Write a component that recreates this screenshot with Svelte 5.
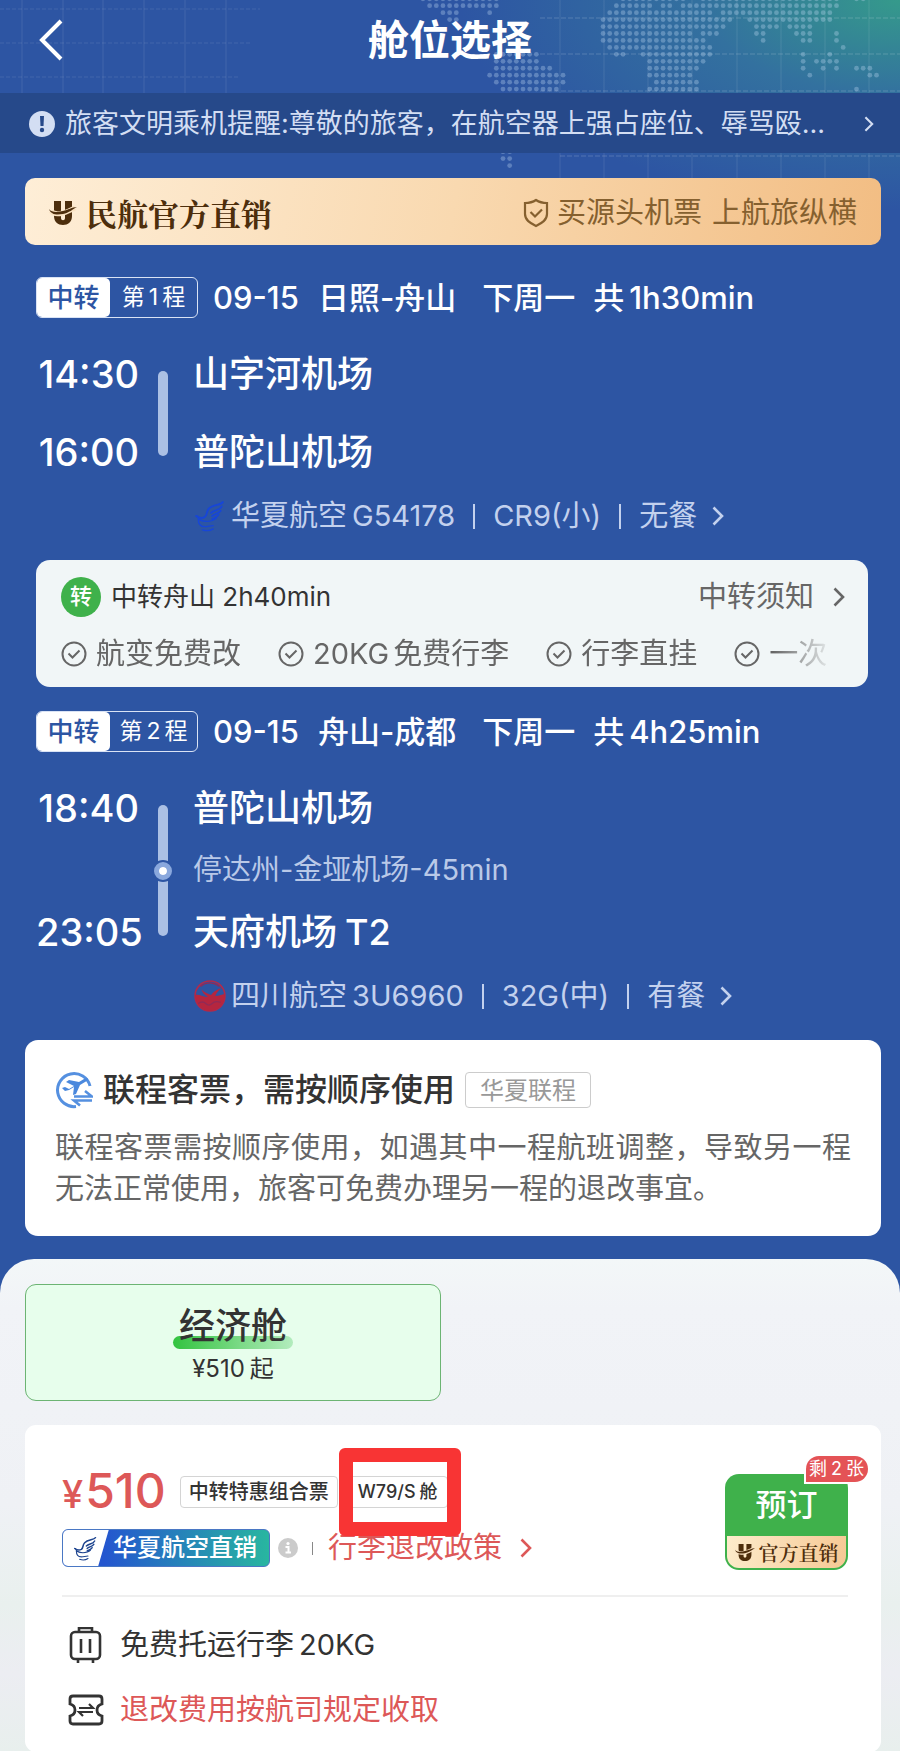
<script lang="ts">
  const legs = [
    {
      label: ['第', '1', '程'],
      date: '09-15',
      route: '日照-舟山',
      duration: '1h30min',
      from: { time: '14:30', airport: '山字河机场', terminal: '' },
      to: { time: '16:00', airport: '普陀山机场', terminal: '' },
      stop: '',
      airline: '华夏航空',
      logo: 'huaxia',
      flight: 'G54178',
      plane: 'CR9(小)',
      meal: '无餐'
    },
    {
      label: ['第', '2', '程'],
      date: '09-15',
      route: '舟山-成都',
      duration: '4h25min',
      from: { time: '18:40', airport: '普陀山机场', terminal: '' },
      to: { time: '23:05', airport: '天府机场', terminal: 'T2' },
      stop: '停达州-金垭机场-45min',
      airline: '四川航空',
      logo: 'sichuan',
      flight: '3U6960',
      plane: '32G(中)',
      meal: '有餐'
    }
  ];

  const perks = [['航变免费改'], ['20KG', '免费行李'], ['行李直挂'], ['一次']];

  // Dotted world map: [row, first column, last column]
  const runs = [
    [-1, -12, -1], [-1, 18, 27], [-1, 30, 50], [-1, 53, 54],
    [0, -11, -1], [0, 17, 22], [0, 24, 25], [0, 27, 50],
    [1, -9, -7], [1, -2, -2], [1, 16, 31], [1, 33, 49],
    [2, -8, -7], [2, 15, 34], [2, 37, 49],
    [3, 15, 33], [3, 38, 41], [3, 43, 46],
    [4, 15, 28], [4, 30, 32], [4, 38, 39], [4, 44, 46], [4, 50, 50],
    [5, 15, 30], [5, 39, 39], [5, 45, 46], [5, 50, 50],
    [6, 16, 31], [6, 51, 51],
    [7, -1, 5], [7, 17, 18], [7, 21, 31], [7, 45, 45], [7, 49, 49],
    [8, -1, 5], [8, 22, 30], [8, 45, 45], [8, 47, 50],
    [9, -1, 7], [9, 22, 29], [9, 45, 45], [9, 48, 48], [9, 50, 50], [9, 53, 55],
    [10, -2, 9], [10, 22, 28], [10, 46, 46], [10, 55, 56],
    [11, -1, 9], [11, 23, 29],
    [12, 0, 8], [12, 22, 29], [12, 53, 53],
    [21, 0, 1], [22, 0, 1], [23, 1, 1]
  ];

  const dots = runs.flatMap(([row, first, last]) =>
    Array.from({ length: last - first + 1 }, (_, i) => ({
      x: 503 + (first + i) * 6.67,
      y: 5.7 + row * 6.95
    }))
  );

  const meridians = [22, 63, 103, 144, 185, 226, 560, 604, 648, 692, 737, 781, 825, 869];
</script>

{#snippet chevron()}
  <svg class="chevron" viewBox="0 0 12 20" aria-hidden="true">
    <path d="M1.5 1.5 10 10l-8.500 8.500" fill="none" stroke="currentColor" stroke-width="2.600" />
  </svg>
{/snippet}

{#snippet wing()}
  <g fill="none" stroke="currentColor" stroke-linecap="round" stroke-linejoin="round">
    <path d="M27 2c-2 3-9 2-13 6-3 3-1 6-4 8-2 1-5 1-8-1" stroke-width="1.800" />
    <path d="M26 6c-2 4-7 3-10 6M25 10c-2 3-6 3-8 5M23 14c-1 2-4 3-6 4" stroke-width="1.700" />
    <path d="M3 15c1 4 4 5 9 5 4 0 7-1 9-3M4 18c0 4 2 7 6 7 3 0 5-1 8-1M8 28c3 1 7 1 10-1" stroke-width="1.300" />
  </g>
{/snippet}

{#snippet sellerLogo()}
  <svg class="seller-logo" viewBox="0 0 28 26" aria-hidden="true">
    <path d="M5 1h7v17c0 3 4 3 4 0V1h7v15c0 6-4 9-9 9s-9-3-9-9z" fill="currentColor" />
    <path d="M2 11c3 4 8 3 12 2s8-3 12-5" fill="none" stroke="#fbe3c2" stroke-width="5" />
    <path d="M0 9c3 4 9 3 14 2 5-1 9-4 14-4-4 2-8 6-14 7C8 15 2 15 0 9z" fill="currentColor" />
  </svg>
{/snippet}

<div class="page">
  <svg class="map" viewBox="0 0 900 178" preserveAspectRatio="xMaxYMin slice" aria-hidden="true">
    <g stroke="#ffffff" stroke-opacity="0.1">
      {#each meridians as x}
        <path d="M{x} 0V{x < 300 ? 93 : 178}" />
      {/each}
      <path d="M0 9H260M0 43H250M0 77H240" stroke-dasharray="4 2" />
      <path d="M540 18H900M540 54H900M540 91H900M560 156H900" stroke-dasharray="5 2" stroke-opacity="0.18" />
    </g>
    <g fill="#c5dcf5" fill-opacity="0.32">
      {#each dots as dot}
        <circle cx={dot.x} cy={dot.y} r="2.400" />
      {/each}
    </g>
  </svg>

  <header class="topbar">
    <button class="back" aria-label="返回">
      <svg viewBox="0 0 26 42" aria-hidden="true">
        <path d="M23 2 4 21l19 19" fill="none" stroke="currentColor" stroke-width="4" />
      </svg>
    </button>
    <h1>舱位选择</h1>
  </header>

  <a class="alert" href="#alert">
    <svg class="alert-icon" viewBox="0 0 26 26" aria-hidden="true">
      <circle cx="13" cy="13" r="13" fill="#d3def3" />
      <path d="M11 5h4l-.5 10h-3z" fill="#26498a" />
      <circle cx="13" cy="19" r="2.200" fill="#26498a" />
    </svg>
    <span class="alert-text">旅客文明乘机提醒:尊敬的旅客，在航空器上强占座位、辱骂殴...</span>
    {@render chevron()}
  </a>

  <main>
    <section class="seller">
      <div class="seller-name">
        {@render sellerLogo()}
        <strong>民航官方直销</strong>
      </div>
      <div class="seller-slogan">
        <svg viewBox="0 0 26 30" aria-hidden="true">
          <path d="M13 2c3 2 7 3 11 3v11c0 6-5 9-11 12C7 25 2 22 2 16V5c4 0 8-1 11-3z" fill="none" stroke="currentColor" stroke-width="2.200" />
          <path d="m7.500 14 4.500 4.500 7-7" fill="none" stroke="currentColor" stroke-width="2.200" />
        </svg>
        <span>买源头机票</span>
        <span>上航旅纵横</span>
      </div>
    </section>

    {#each legs as leg, i}
      <section class="leg">
        <h2 class="leg-head">
          <span class="leg-tag">
            <span class="leg-kind">中转</span>
            <span class="leg-no">
              {#each leg.label as part}<span>{part}</span>{/each}
            </span>
          </span>
          <span class="leg-text">
            <span class="leg-date">{leg.date}</span>
            <span class="leg-route">{leg.route}</span>
            <span class="leg-day">下周一</span>
            <span>共</span>
            <span class="leg-total">{leg.duration}</span>
          </span>
        </h2>

        <div class="schedule" class:with-stop={leg.stop}>
          <div class="times">
            <time>{leg.from.time}</time>
            <time>{leg.to.time}</time>
          </div>
          <div class="rail">
            {#if leg.stop}<span class="rail-dot"></span>{/if}
          </div>
          <div class="stations">
            <span class="airport">{leg.from.airport}</span>
            {#if leg.stop}<span class="stop">{leg.stop}</span>{/if}
            <span class="airport">
              {leg.to.airport}
              {#if leg.to.terminal}<span>{leg.to.terminal}</span>{/if}
            </span>
          </div>
        </div>

        <a class="meta" href="#flight-{i + 1}">
          {#if leg.logo === 'huaxia'}
            <svg class="airline-logo huaxia" viewBox="0 0 30 30" aria-hidden="true">{@render wing()}</svg>
          {:else}
            <svg class="airline-logo" viewBox="0 0 30 30" aria-hidden="true">
              <circle cx="15" cy="15" r="14" fill="none" stroke="#b02a4c" stroke-width="1.500" />
              <path d="M1 14c4-1 8 2 12 2-3-2-5-4-6-7 3 3 6 4 9 5 3-4 6-5 10-7-3 3-5 5-6 8 3 0 6-1 9-2 1 9-6 16-14 16S1 22 1 14z" fill="#b5263f" />
              <path d="M6 6c6-5 13-4 18 0M4 22c3-2 5-2 7 0s4 2 6 0 5-2 8-1" fill="none" stroke="#8f2b58" stroke-width="1.200" />
            </svg>
          {/if}
          <span>{leg.airline}</span>
          <span>{leg.flight}</span>
          <i></i>
          <span>{leg.plane}</span>
          <i></i>
          <span class="meal">{leg.meal}</span>
          {@render chevron()}
        </a>
      </section>

      {#if i === 0}
        <section class="transfer">
          <div class="transfer-head">
            <span class="transfer-icon">转</span>
            <span class="transfer-city">中转舟山 2h40min</span>
            <a class="transfer-link" href="#transfer">中转须知 {@render chevron()}</a>
          </div>
          <ul class="perks">
            {#each perks as perk}
              <li>
                <svg viewBox="0 0 26 26" aria-hidden="true">
                  <circle cx="13" cy="13" r="11.500" fill="none" stroke="currentColor" stroke-width="2" />
                  <path d="m7.500 12.500 4 4 7-7" fill="none" stroke="currentColor" stroke-width="2" />
                </svg>
                {#each perk as part}<span>{part}</span>{/each}
              </li>
            {/each}
          </ul>
        </section>
      {/if}
    {/each}

    <section class="notice">
      <h2>
        <svg viewBox="0 0 38 38" aria-hidden="true">
          <path d="M35 15A16.500 16.500 0 1 0 21 35.500" fill="none" stroke="#5590e0" stroke-width="3" />
          <path d="M7 17l3-1 4 2 5-3-8-4 3-2 10 2 5-3c2-1 4-1 4 0s-1 2-3 3l-5 3-4 9-3 1 1-8-5 3-4 1z" fill="#4a88dd" />
          <path d="M19 25.500h18L30 20M37 29.500H19l6 5" fill="none" stroke="#5590e0" stroke-width="2.600" />
        </svg>
        联程客票，需按顺序使用
        <span class="notice-tag">华夏联程</span>
      </h2>
      <p>联程客票需按顺序使用，如遇其中一程航班调整，导致另一程无法正常使用，旅客可免费办理另一程的退改事宜。</p>
    </section>
  </main>

  <section class="sheet">
    <button class="cabin">
      <span class="cabin-name">经济舱</span>
      <span class="cabin-price">¥510<span>起</span></span>
    </button>

    <article class="fare">
      <div class="fare-top">
        <div class="fare-info">
          <div class="fare-price">
            <span class="price"><small>¥</small>510</span>
            <span class="chip">中转特惠组合票</span>
            <span class="chip seat">W79/S<span class="seat-unit">舱</span><span class="marker"></span></span>
          </div>
          <div class="fare-links">
            <span class="carrier">
              <span class="carrier-logo">
                <svg viewBox="0 0 30 30" aria-hidden="true">{@render wing()}</svg>
              </span>
              <span class="carrier-name">华夏航空直销</span>
            </span>
            <button class="info" aria-label="说明">
              <svg viewBox="0 0 20 20" aria-hidden="true">
                <circle cx="10" cy="10" r="10" fill="#cbcbcb" />
                <circle cx="10" cy="5.500" r="1.600" fill="#fff" />
                <path d="M7.500 9H10.500v5.500M7.500 14.500h5.500" fill="none" stroke="#fff" stroke-width="2" />
              </svg>
            </button>
            <i></i>
            <a class="policy" href="#policy">行李退改政策 {@render chevron()}</a>
          </div>
        </div>

        <button class="book">
          <span class="book-label">预订</span>
          <span class="book-seller">{@render sellerLogo()}官方直销</span>
          <span class="left"><span>剩</span><span>2</span><span>张</span></span>
        </button>
      </div>

      <ul class="rules">
        <li>
          <svg viewBox="0 0 36 36" fill="none" stroke="#333" stroke-width="2.600" aria-hidden="true">
            <rect x="3" y="5" width="29" height="27" rx="4" />
            <path d="M11 5V1h13v4M13 12v14M22 12v14M10 32v4M25 32v4" />
          </svg>
          <span>免费托运行李</span><span class="weight">20KG</span>
        </li>
        <li class="warn">
          <svg viewBox="0 0 36 36" fill="none" stroke="#333" stroke-width="2.800" aria-hidden="true">
            <path d="M5 4h26c2 0 3 1 3 3v5c-4 1-5 3-5 6s1 5 5 6v5c0 2-1 3-3 3H5c-2 0-3-1-3-3v-5c4-1 5-3 5-6s-1-5-5-6V7c0-2 1-3 3-3z" />
            <path d="M11 16h14l-4-4M25 20H11l4 4" stroke-width="2.200" />
          </svg>
          <span>退改费用按航司规定收取</span>
        </li>
      </ul>
    </article>
  </section>
</div>

<style>
  :global(body) {
    margin: 0;
    background: #2d55a3;
  }

  .page {
    position: relative;
    color: #fff;
    font-family: Inter, 'Noto Sans CJK SC', sans-serif;
    background: radial-gradient(ellipse 440px 210px at 100% 0, #359a8b 0, #33719f 45%, #2d55a3 100%) no-repeat #2d55a3;
  }

  .page * {
    box-sizing: border-box;
  }

  h1, h2, p, ul {
    margin: 0;
    padding: 0;
    font-weight: 400;
    list-style: none;
  }

  button {
    padding: 0;
    border: 0;
    font: inherit;
    color: inherit;
    background: none;
    cursor: pointer;
  }

  a {
    color: inherit;
    text-decoration: none;
  }

  svg {
    flex: none;
  }

  .chevron {
    width: 12px;
    height: 20px;
  }

  .map {
    position: absolute;
    top: 0;
    left: 0;
    width: 100%;
    height: 178px;
  }

  .topbar {
    position: relative;
    display: grid;
    grid-template-columns: 1fr auto 1fr;
    align-items: center;
    height: 93px;
    padding: 0 38px 14px;
  }

  .back {
    width: 26px;
    height: 42px;
  }

  h1 {
    font-size: 41px;
    line-height: 50px;
    font-weight: 600;
  }

  .alert {
    position: relative;
    display: flex;
    align-items: center;
    gap: 10px;
    height: 60px;
    padding: 2px 26px 0 29px;
    color: #d3def3;
    background: #26498a;
  }

  .alert-icon {
    width: 26px;
    height: 26px;
  }

  .alert-text {
    flex: 1;
    overflow: hidden;
    font-size: 27px;
    line-height: 40px;
    white-space: nowrap;
    text-overflow: ellipsis;
  }

  .alert .chevron {
    width: 10px;
    height: 16px;
  }

  main {
    position: relative;
    padding: 25px 19px 23px 25px;
  }

  .seller {
    display: flex;
    align-items: center;
    justify-content: space-between;
    height: 67px;
    padding: 2px 24px 0;
    border-radius: 10px;
    color: #4d2e0c;
    background: linear-gradient(100deg, #feeed7, #f9d9b0 50%, #f2bd83);
  }

  .seller-name,
  .seller-slogan {
    display: flex;
    align-items: center;
  }

  .seller-name {
    gap: 9px;
  }

  .seller-logo {
    width: 28px;
    height: 26px;
  }

  .seller-name strong {
    font-family: 'Noto Serif CJK SC', 'Noto Sans CJK SC', serif;
    font-size: 31px;
    line-height: 40px;
  }

  .seller-slogan {
    gap: 10px;
    color: #85602f;
    font-size: 29px;
    line-height: 40px;
  }

  .seller-slogan svg {
    width: 26px;
    height: 30px;
    margin-right: -2px;
  }

  .leg {
    margin: 32px 13px 24px 11px;
  }

  .leg-head {
    display: flex;
    align-items: center;
    gap: 15px;
    white-space: nowrap;
  }

  .leg-tag {
    display: flex;
    height: 41px;
    border: 1px solid #d9e3f5;
    border-radius: 6px;
    line-height: 39px;
  }

  .leg-kind {
    width: 73px;
    border-radius: 5px;
    color: #2d55a3;
    font-size: 26px;
    font-weight: 500;
    text-align: center;
    background: #fff;
  }

  .leg-no {
    display: flex;
    gap: 4px;
    justify-content: center;
    width: 87px;
    font-size: 23px;
  }

  .leg-text {
    display: flex;
    align-items: baseline;
    font-size: 31px;
    line-height: 41px;
    font-weight: 500;
  }

  .leg-date {
    margin-right: 19px;
  }

  .leg-route {
    margin-right: 26px;
  }

  .leg-day {
    margin-right: 18px;
  }

  .leg-total {
    margin-left: 5px;
  }

  .schedule {
    display: flex;
    margin-top: 31px;
  }

  .times,
  .stations {
    display: flex;
    flex-direction: column;
    justify-content: space-between;
    gap: 28px;
    line-height: 50px;
    font-weight: 500;
  }

  .with-stop .stations {
    gap: 17px;
  }

  .times {
    width: 103px;
    font-size: 38px;
    text-align: right;
  }

  .rail {
    display: flex;
    align-items: center;
    justify-content: center;
    width: 10px;
    margin: 22px 25px 21px 19px;
    border-radius: 5px;
    background: #abc0e4;
  }

  .rail-dot {
    flex: none;
    width: 18px;
    height: 18px;
    border: 5px solid #8aa8dd;
    border-radius: 50%;
    background: #fff;
    box-shadow: 0 0 0 2px #2d55a3;
    background-clip: padding-box;
  }

  .airport {
    display: flex;
    gap: 8px;
    font-size: 36px;
  }

  .stop {
    color: #b9c9e8;
    font-size: 29px;
    font-weight: 400;
    line-height: 40px;
  }

  .meta {
    display: flex;
    align-items: center;
    gap: 5px;
    margin-top: 19px;
    padding-left: 158px;
    color: #c3d1ee;
    font-size: 29px;
    line-height: 40px;
    white-space: nowrap;
  }

  .airline-logo {
    width: 32px;
    height: 32px;
  }

  .huaxia {
    color: #1746d8;
  }

  .meta i {
    width: 2px;
    height: 25px;
    margin: 0 13px;
    background: #c3d1ee;
  }

  .meal {
    margin-right: 10px;
  }

  .transfer {
    height: 127px;
    margin: 0 13px 24px 11px;
    padding: 17px 23px 0 25px;
    border-radius: 14px;
    color: #666;
    background: #f1f6f7;
  }

  .transfer + .leg {
    margin-top: 24px;
  }

  .transfer-head {
    display: flex;
    align-items: center;
    height: 40px;
  }

  .transfer-icon {
    width: 40px;
    height: 40px;
    margin-right: 10px;
    border-radius: 50%;
    color: #fff;
    font-size: 22px;
    font-weight: 500;
    line-height: 39px;
    text-align: center;
    background: #3fb14b;
  }

  .transfer-city {
    flex: 1;
    color: #333;
    font-size: 26px;
    line-height: 40px;
  }

  .transfer-link {
    display: flex;
    align-items: center;
    gap: 19px;
    font-size: 29px;
    line-height: 40px;
  }

  .perks {
    display: flex;
    gap: 37px;
    margin: 17px 10px 0 0;
    overflow: hidden;
    font-size: 29px;
    line-height: 40px;
    white-space: nowrap;
    mask-image: linear-gradient(to right, #000 92%, transparent);
  }

  .perks li {
    display: flex;
    align-items: center;
    gap: 4px;
  }

  .perks svg {
    width: 26px;
    height: 26px;
    margin-right: 5px;
  }

  .notice {
    min-height: 196px;
    padding: 30px 30px 26px;
    border-radius: 13px;
    color: #666;
    background: #fff;
  }

  .notice h2 {
    display: flex;
    align-items: center;
    gap: 10px;
    height: 40px;
    color: #333;
    font-size: 32px;
    font-weight: 500;
    line-height: 40px;
    white-space: nowrap;
  }

  .notice h2 svg {
    width: 38px;
    height: 38px;
  }

  .notice-tag {
    height: 36px;
    padding: 0 14px;
    border: 1px solid #ccc;
    border-radius: 4px;
    color: #999;
    font-size: 24px;
    font-weight: 400;
    line-height: 35px;
  }

  .notice p {
    margin-top: 17px;
    font-size: 29px;
    line-height: 41px;
    text-align: justify;
  }

  .sheet {
    position: relative;
    padding: 25px 19px 0 25px;
    border-radius: 34px 34px 0 0;
    color: #333;
    background: linear-gradient(#f3f7f8, #f1f3f7 10%, #eff1f5 50%, #e9f0ee 70%, #ecedf2 84%, #e8efed);
  }

  .cabin {
    display: flex;
    flex-direction: column;
    align-items: center;
    width: calc(50% - 12px);
    height: 117px;
    padding-top: 16px;
    border: 1px solid #6cb473;
    border-radius: 11px;
    background: #e7feec;
  }

  .cabin-name {
    position: relative;
    z-index: 0;
    padding: 0 6px;
    font-size: 36px;
    font-weight: 500;
    line-height: 50px;
  }

  .cabin-name::after {
    content: '';
    position: absolute;
    z-index: -1;
    right: 0;
    bottom: 2px;
    left: 0;
    height: 13px;
    border-radius: 7px;
    background: linear-gradient(90deg, #33c340, #b3ecbd);
  }

  .cabin-price {
    display: flex;
    gap: 5px;
    font-size: 24px;
    line-height: 36px;
  }

  .fare {
    margin-top: 24px;
    padding: 43px 33px 22px 37px;
    border-radius: 11px;
    background: #fff;
  }

  .fare-top {
    display: flex;
    justify-content: space-between;
    padding-bottom: 25px;
    border-bottom: 2px solid #efefef;
  }

  .fare-price {
    display: flex;
    align-items: center;
    height: 48px;
    white-space: nowrap;
  }

  .price {
    margin-right: 14px;
    color: #dd5858;
    font-size: 48px;
    font-weight: 500;
    line-height: 48px;
  }

  .price small {
    margin-right: 2px;
    font-size: 38px;
  }

  .chip {
    position: relative;
    height: 32px;
    margin-right: 4px;
    padding: 0 8px;
    border: 1px solid #d4d4d4;
    border-radius: 4px;
    font-size: 20px;
    font-weight: 500;
    line-height: 30px;
  }

  .seat {
    padding: 0 9px 0 15px;
    font-size: 18px;
  }

  .seat-unit {
    margin-left: 4px;
  }

  /* hand-drawn highlight round the booking class */
  .marker {
    position: absolute;
    z-index: 1;
    inset: -29px -14px -29px -4px;
    border: 14px solid #f83434;
    border-radius: 6px;
  }

  .fare-links {
    display: flex;
    align-items: center;
    height: 38px;
    margin-top: 13px;
    white-space: nowrap;
  }

  .carrier {
    display: flex;
    align-items: center;
    height: 38px;
    padding-right: 12px;
    border: 1px solid #4a78c4;
    border-radius: 6px;
    color: #fff;
    background: linear-gradient(90deg, #2456cf 20%, #28b6a0);
    overflow: hidden;
  }

  .carrier-logo {
    display: flex;
    align-items: center;
    width: 46px;
    height: 38px;
    margin-right: 4px;
    padding-left: 10px;
    color: #1f4590;
    background: #fff;
    clip-path: polygon(0 0, 100% 0, 76% 100%, 0 100%);
  }

  .carrier-logo svg {
    width: 25px;
    height: 25px;
  }

  .carrier-name {
    font-size: 24px;
    font-weight: 500;
    line-height: 36px;
  }

  .info {
    width: 20px;
    height: 20px;
    margin-left: 8px;
  }

  .info svg {
    display: block;
  }

  .fare-links i {
    width: 1px;
    height: 13px;
    margin: 0 15px 0 14px;
    background: #888;
  }

  .policy {
    display: flex;
    align-items: center;
    gap: 18px;
    color: #dd5858;
    font-size: 29px;
    line-height: 38px;
  }

  .book {
    position: relative;
    display: flex;
    flex-direction: column;
    width: 123px;
    height: 96px;
    margin-top: 6px;
    padding: 0 2px 2px;
    border-radius: 14px;
    background: #3fb14b;
  }

  .book-label {
    width: 100%;
    height: 62px;
    color: #fff;
    font-size: 31px;
    font-weight: 500;
    line-height: 61px;
    text-align: center;
  }

  .book-seller {
    display: flex;
    align-items: center;
    justify-content: center;
    gap: 4px;
    width: 100%;
    height: 32px;
    border-radius: 0 0 12px 12px;
    color: #4d2e0c;
    font-family: 'Noto Serif CJK SC', 'Noto Sans CJK SC', serif;
    font-size: 20px;
    font-weight: 600;
    background: linear-gradient(100deg, #fdeccb, #f6c894);
  }

  .book-seller .seller-logo {
    width: 20px;
    height: 19px;
  }

  .left {
    position: absolute;
    top: -18px;
    right: -20px;
    display: flex;
    gap: 4px;
    padding: 0 4px 0 3px;
    border-radius: 13px 13px 13px 0;
    color: #fff;
    font-size: 18px;
    line-height: 26px;
    background: #e45356;
    box-shadow: 0 0 0 2px #fff;
    white-space: nowrap;
  }

  .rules {
    display: flex;
    flex-direction: column;
    gap: 25px;
    margin-top: 28px;
  }

  .rules li {
    display: flex;
    align-items: center;
    padding-left: 6px;
    font-size: 29px;
    line-height: 40px;
  }

  .rules svg {
    width: 36px;
    height: 36px;
    margin-right: 16px;
  }

  .weight {
    margin-left: 5px;
  }

  .warn {
    color: #dd5858;
  }
</style>
